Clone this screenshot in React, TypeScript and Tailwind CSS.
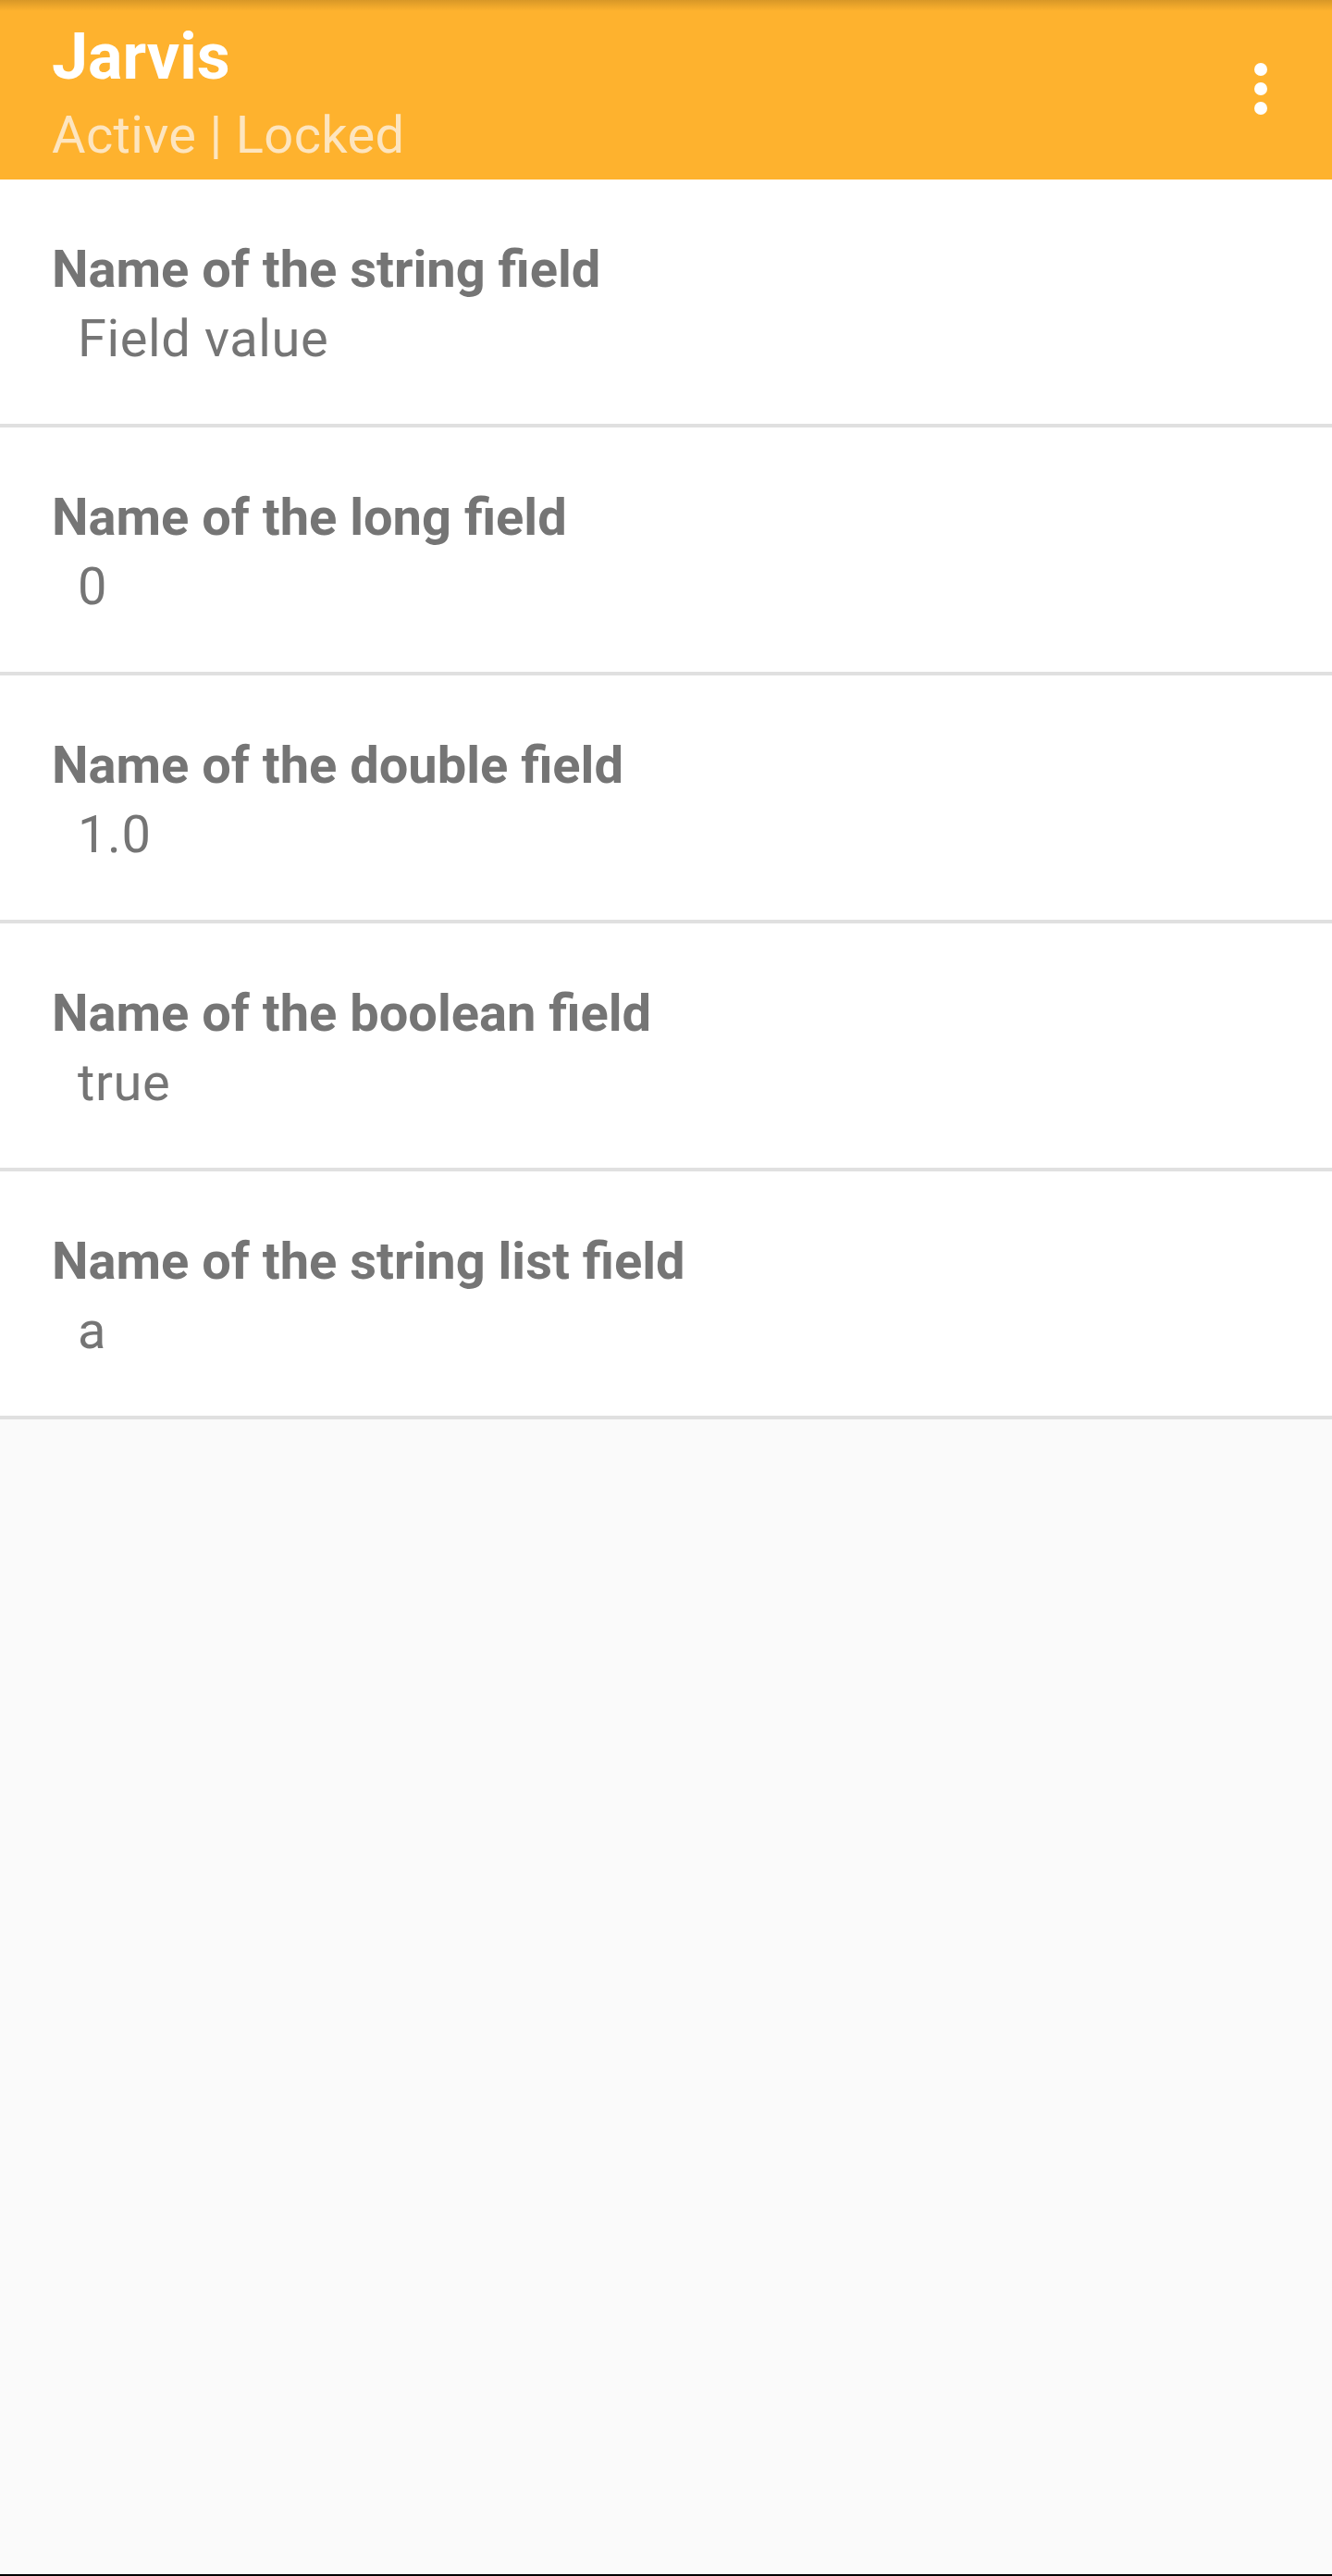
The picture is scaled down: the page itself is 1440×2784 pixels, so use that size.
const fields = [
  { name: "Name of the string field", value: "Field value" },
  { name: "Name of the long field", value: "0" },
  { name: "Name of the double field", value: "1.0" },
  { name: "Name of the boolean field", value: "true" },
  { name: "Name of the string list field", value: "a" },
];

function OverflowDots() {
  return (
    <button type="button" className="flex flex-col items-center gap-[7px]" aria-label="More options">
      <span className="h-[14px] w-[14px] rounded-full bg-white" />
      <span className="h-[14px] w-[14px] rounded-full bg-white" />
      <span className="h-[14px] w-[14px] rounded-full bg-white" />
    </button>
  );
}

export default function App() {
  return (
    <div className="flex h-[2784px] w-full flex-col bg-[#fafafa] font-['Roboto',sans-serif]">
      <header className="relative flex h-[194px] shrink-0 items-start justify-between bg-[#feb22e] pl-[56px] pr-[70px]">
        <div className="pointer-events-none absolute inset-x-0 top-0 h-[12px] bg-gradient-to-b from-black/15 to-transparent" />
        <div className="flex flex-col pt-[20px]">
          <h1 className="text-[70px] font-bold leading-[82px] text-white">Jarvis</h1>
          <p className="mt-[11px] text-[56px] leading-[66px] tracking-[0.35px] text-[#fde5bf]">
            Active | Locked
          </p>
        </div>
        <div className="pt-[68px]">
          <OverflowDots />
        </div>
      </header>

      <ul className="flex flex-col bg-white">
        {fields.map((field) => (
          <li
            key={field.name}
            className="flex h-[268px] flex-col border-b-4 border-[#e0e0e0] pl-[56px] pt-[64px]"
          >
            <span className="text-[56px] font-bold leading-[66px] text-[#757575]">{field.name}</span>
            <span className="mt-[9px] pl-[28px] text-[56px] leading-[66px] tracking-[0.6px] text-[#757575]">
              {field.value}
            </span>
          </li>
        ))}
      </ul>

      <div className="flex-1" />
      <div className="h-[2px] shrink-0 bg-black" />
    </div>
  );
}
